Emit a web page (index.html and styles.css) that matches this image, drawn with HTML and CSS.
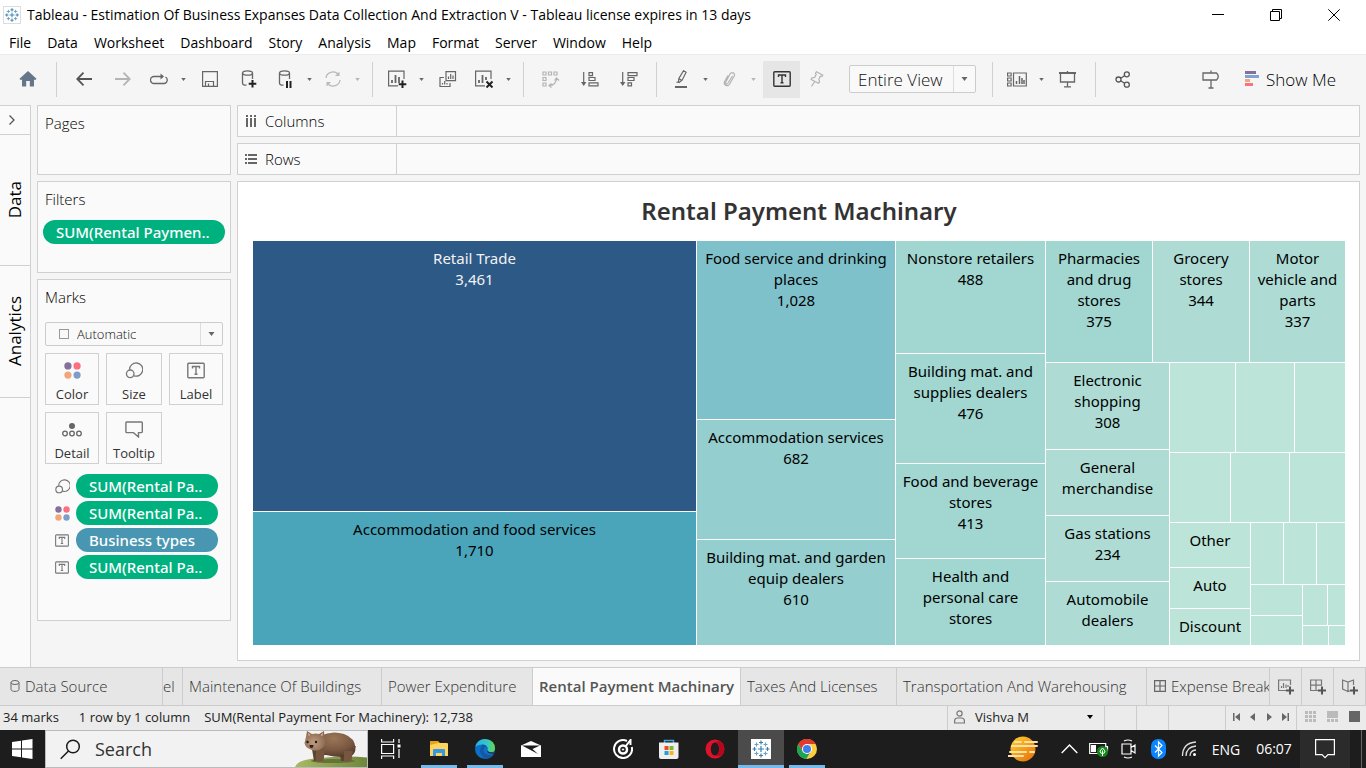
FILE: index.html
```html
<!DOCTYPE html>
<html lang="en">
<head>
<meta charset="utf-8">
<meta name="viewport" content="width=device-width, initial-scale=1">
<title>Tableau - Rental Payment Machinary</title>
<link rel="stylesheet" href="styles.css">
</head>
<body>
<svg class="defs" aria-hidden="true">
  <symbol id="caret" viewBox="0 0 6 4"><path d="M0 0h6L3 4z" fill="currentColor"/></symbol>
  <symbol id="label" viewBox="0 0 18 16"><path d="M1.7.8h14.6a.9.9 0 0 1 .9.9v12.6a.9.9 0 0 1-.9.9H1.7a.9.9 0 0 1-.9-.9V1.700a.9.9 0 0 1 .9-.9zM5.500 6V4h7v2M9 4v7.500M7.500 11.800h3" fill="none" stroke="currentColor" stroke-width="1.400"/></symbol>
  <symbol id="size" viewBox="0 0 18 18"><g fill="none" stroke="currentColor" stroke-width="1.400"><path d="M4.300 8A7 7 0 1 1 9 14.600"/><circle cx="5" cy="12.500" r="4"/></g></symbol>
  <symbol id="color" viewBox="0 0 16 16"><circle cx="3.700" cy="3.700" r="3.400" fill="#84709b"/><circle cx="12.300" cy="3.700" r="3.400" fill="#fc7182"/><circle cx="3.700" cy="12.300" r="3.400" fill="#f1a67c"/><circle cx="12.300" cy="12.300" r="3.400" fill="#7c9fc9"/></symbol>
  <symbol id="tableau" viewBox="0 0 20 20"><path fill="#fff" d="M0 0h20v20H0z"/><g fill="none" stroke-width="1.200"><path stroke="#3f7fae" d="M10 7v6M7 10h6M10 1.500v4M8 3.500h4M10 14.500v4M8 16.500h4M3.500 8v4M1.500 10h4M16.500 8v4M14.500 10h4"/><path stroke="#6ba3c6" d="M5.500 3.500v4M3.500 5.500h4M14.500 3.500v4M12.500 5.500h4M5.500 12.500v4M3.500 14.500h4M14.500 12.500v4M12.500 14.500h4"/></g></symbol>
</svg>

<div class="app">
  <header class="titlebar">
    <svg class="logo" width="18" height="18"><use href="#tableau"/></svg>
    <h1 class="titlebar-text">Tableau - Estimation Of Business Expanses Data Collection And Extraction V - Tableau license expires in 13 days</h1>
    <div class="window-buttons">
      <button aria-label="Minimize"><svg width="12" height="12"><path d="M0 5.500h12" stroke="#000"/></svg></button>
      <button aria-label="Restore"><svg width="12" height="12" fill="none" stroke="#000"><path d="M.5 2.500h9v9h-9zM2.500 2.500v-2h9v9h-2"/></svg></button>
      <button aria-label="Close"><svg width="12" height="12"><path d="M.3.300l11.400 11.400M11.700.300L.3 11.700" stroke="#000"/></svg></button>
    </div>
  </header>

  <nav class="menubar" aria-label="Main menu">
    <button>File</button><button>Data</button><button>Worksheet</button><button>Dashboard</button><button>Story</button><button>Analysis</button><button>Map</button><button>Format</button><button>Server</button><button>Window</button><button>Help</button>
  </nav>

  <div class="toolbar" role="toolbar" aria-label="Toolbar">
    <button class="tool tool-home" aria-label="Start page"><svg width="18" height="16"><path d="M9 0l8.500 7.800-.6.900H15V15.500h-4.200V10H7.200v5.500H3V8.700H1L.5 7.800z" fill="#667689"/></svg></button>
    <span class="sep sep-first"></span>
    <button class="tool wide" aria-label="Undo"><svg width="16" height="14" fill="none" stroke="#555" stroke-width="1.800"><path d="M16 7H1.500M7.500.700L1.300 7l6.200 6.300"/></svg></button>
    <button class="tool wide" aria-label="Redo"><svg width="16" height="14" fill="none" stroke="#b4b4b4" stroke-width="1.800"><path d="M0 7h14.500M8.500.700L14.700 7l-6.200 6.300"/></svg></button>
    <button class="tool" aria-label="Replay"><svg width="18" height="12" fill="none" stroke="#666" stroke-width="1.300"><path d="M4 10.500A3.500 3.500 0 0 1 4 3.500h9M15.500 4a3.500 3.500 0 0 1-1.500 6.500H4"/><path d="M10.500.500l3.500 3-3.500 3z" fill="#666" stroke="none"/></svg></button>
    <button class="drop" aria-label="Replay options"><svg width="5" height="3"><use href="#caret"/></svg></button>
    <button class="tool wide" aria-label="Save"><svg width="16" height="16" fill="none" stroke="#666" stroke-width="1.200"><path d="M.600.600h14.800v14.800H.6zM3.500 15v-4.500h8V15M6.500 15v-2.500"/></svg></button>
    <button class="tool wide" aria-label="New data source"><svg width="16" height="18" fill="none" stroke="#666" stroke-width="1.300"><ellipse cx="6.500" cy="3" rx="5" ry="2.200"/><path d="M1.500 3v10c0 1.300 2 2.200 4 2.200M11.500 3v6"/><path d="M11.500 10v7.500M7.700 13.700h7.600" stroke="#222" stroke-width="2"/></svg></button>
    <button class="tool" aria-label="Pause auto updates"><svg width="16" height="18" fill="none" stroke="#666" stroke-width="1.300"><ellipse cx="7.500" cy="3" rx="5" ry="2.200"/><path d="M2.500 3v10c0 1.300 2 2.200 4 2.200M12.500 3v6"/><path d="M10 11v7M13.500 11v7" stroke="#222" stroke-width="2"/></svg></button>
    <button class="drop" aria-label="Update options"><svg width="5" height="3"><use href="#caret"/></svg></button>
    <button class="tool" aria-label="Refresh"><svg width="18" height="16" fill="none" stroke="#b9b9b9" stroke-width="1.300"><path d="M2 7a7 6.500 0 0 1 12-4M16 9a7 6.500 0 0 1-12 4"/><path d="M15.500.500v4.500h-4.500zM2.500 15.500V11H7z" fill="#b9b9b9" stroke="none"/></svg></button>
    <button class="drop off" aria-label="Refresh options"><svg width="5" height="3"><use href="#caret"/></svg></button>
    <span class="sep"></span>
    <button class="tool" aria-label="New worksheet"><svg width="20" height="18" fill="none" stroke="#666" stroke-width="1.200"><path d="M17 9V1.200H1.600v14.600H11"/><path d="M5 13v-3M8.500 13V5M12 13V7" stroke-width="1.800"/><path d="M15.500 10.500V18M11.700 14.200h7.600" stroke="#222" stroke-width="2"/></svg></button>
    <button class="drop" aria-label="New options"><svg width="5" height="3"><use href="#caret"/></svg></button>
    <button class="tool wide" aria-label="Duplicate"><svg width="18" height="16" fill="none" stroke="#666" stroke-width="1.200"><path d="M7 .600h9.500v9H7zM5 6.500H1v9h10v-3.500"/><path d="M9.500 8V5.500M11.700 8V3M14 8V4.500M3.500 13.500V12M5.700 13.500V10M8 13.500V12"/></svg></button>
    <button class="tool" aria-label="Clear sheet"><svg width="20" height="18" fill="none" stroke="#666" stroke-width="1.200"><path d="M17 9V1.200H1.600v14.600H11"/><path d="M5 13v-3M8.500 13V5M12 10V7" stroke-width="1.800"/><path d="M12.500 11.500l6 6M18.500 11.500l-6 6" stroke="#222" stroke-width="2"/></svg></button>
    <button class="drop" aria-label="Clear options"><svg width="5" height="3"><use href="#caret"/></svg></button>
    <span class="sep"></span>
    <button class="tool wide" aria-label="Swap rows and columns"><svg width="18" height="17" fill="none" stroke="#b4b4b4" stroke-width="1.200"><path d="M1 1h3v3H1zM6.500 1h3v3h-3zM12 1h3v3h-3zM1 6.500h3v3H1zM1 12h3v3H1z"/><path d="M14.500 7.500c0 4-3 7-7 7M12.500 9.500l2-2.500 2.500 2.500M9.500 12.500l-2.500 2 2.500 2"/></svg></button>
    <button class="tool wide" aria-label="Sort ascending"><svg width="18" height="15" fill="none" stroke="#666" stroke-width="1.200"><path d="M2.700 0v13M8 .600h3.500v3H8zM8 5.500h6v3H8zM8 10.800h9v3H8z"/><path d="M0 10h5.400l-2.700 4z" fill="#666" stroke="none"/></svg></button>
    <button class="tool wide" aria-label="Sort descending"><svg width="18" height="15" fill="none" stroke="#666" stroke-width="1.200"><path d="M2.700 0v13M8 .600h9v3H8zM8 5.500h6v3H8zM8 10.800h3.500v3H8z"/><path d="M0 10h5.400l-2.700 4z" fill="#666" stroke="none"/></svg></button>
    <span class="sep"></span>
    <button class="tool" aria-label="Highlight"><svg width="14" height="18" fill="none" stroke="#666" stroke-width="1.200"><path d="M9.500.700l2.600 1.500-4 8-3 2.300-.7-.4.500-3.600zM5 8.700l3 1.800M2.500 12.500l2-.800"/><path d="M1 17h12" stroke-width="2"/></svg></button>
    <button class="drop" aria-label="Highlight options"><svg width="5" height="3"><use href="#caret"/></svg></button>
    <button class="tool" aria-label="Group members"><svg width="14" height="16" fill="none" stroke="#b4b4b4" stroke-width="1.200"><path d="M10.500 5l-4.800 7.500c-1 1.300-2.800.300-2-1.300L8 3c1.500-2.800 5.500-.800 4.200 2L7.500 13.200c-1.800 3-6.300 1-5-2.500L6 4.500"/></svg></button>
    <button class="drop off" aria-label="Group options"><svg width="5" height="3"><use href="#caret"/></svg></button>
    <button class="tool tool-on" aria-label="Show mark labels" aria-pressed="true"><svg width="18" height="16"><use href="#label"/></svg></button>
    <button class="tool" aria-label="Fix axes"><svg width="14" height="16" fill="none" stroke="#b4b4b4" stroke-width="1.200"><path d="M6.500.700l6.300 3.500-1 1.300-1.500-.3-1.500 3 .8 2.600-1.200 1.400L1.200 8.500l.6-1.500 2.800-.6 1.600-3-.7-1.300zM4.700 10.500L1.500 15.300"/></svg></button>
    <span class="select select-fit"><select aria-label="Fit"><option>Entire View</option></select><span class="select-arrow"><svg width="7" height="4"><use href="#caret"/></svg></span></span>
    <span class="sep sep-wide"></span>
    <button class="tool" aria-label="Show cards"><svg width="20" height="15" fill="none" stroke="#666" stroke-width="1.200"><path d="M.600 1h3.500v3H.6zM.600 6h3.500v3H.6zM.600 11h3.500v3H.6zM6.500 1h12.800v13H6.500z"/><path d="M9.500 12V9M12.500 12V4M15 12V6M17 12V8" stroke-width="1.500"/></svg></button>
    <button class="drop" aria-label="Card options"><svg width="5" height="3"><use href="#caret"/></svg></button>
    <button class="tool wide" aria-label="Presentation mode"><svg width="18" height="17" fill="none" stroke="#666" stroke-width="1.300"><path d="M1.500 2v9h14V2M8.500 11v4.500M5 15.800h7M8.500 0v2"/><path d="M0 2h17" stroke-width="2"/></svg></button>
    <span class="sep"></span>
    <button class="tool wide" aria-label="Share"><svg width="16" height="17" fill="none" stroke="#555" stroke-width="1.300"><circle cx="3.500" cy="8.500" r="2.500"/><circle cx="11.800" cy="3.300" r="2.500"/><circle cx="11.800" cy="13.700" r="2.500"/><path d="M5.600 7.200l4-2.500M5.600 9.800l4 2.500"/></svg></button>
    <div class="toolbar-end">
      <button class="tool" aria-label="Guide"><svg width="19" height="19" fill="none" stroke="#666" stroke-width="1.300"><path d="M1 3h13.500q3.500 3.500 0 7H1zM9 .500V3M9 10v8M6.500 18h5"/></svg></button>
      <button class="show-me"><svg width="14" height="16"><path fill="#84709b" d="M0 0h11v3H0z"/><path fill="#7fa3d0" d="M0 4h14v3H0z"/><path fill="#f1a67c" d="M0 8h5v3H0z"/><path fill="#fc7182" d="M0 12h8v3H0z"/></svg>Show Me</button>
    </div>
  </div>

  <main class="workspace">
    <aside class="side-tabs">
      <button class="side-toggle" aria-label="Expand pane"><svg width="6" height="10" fill="none" stroke="#555" stroke-width="1.300"><path d="M.500.500L5 5 .500 9.500"/></svg></button>
      <button class="side-tab side-data"><span>Data</span></button>
      <button class="side-tab side-analytics"><span>Analytics</span></button>
    </aside>

    <div class="cards">
      <section class="card card-pages"><h2>Pages</h2></section>
      <section class="card card-filters"><h2>Filters</h2><button class="pill">SUM(Rental Paymen..</button></section>
      <section class="card card-marks">
        <h2>Marks</h2>
        <span class="select select-mark"><i class="square"></i><select aria-label="Mark type"><option>Automatic</option></select><span class="select-arrow"><svg width="7" height="4"><use href="#caret"/></svg></span></span>
        <div class="mark-grid">
          <button><svg width="17" height="17"><use href="#color"/></svg>Color</button>
          <button><svg width="18" height="17"><use href="#size"/></svg>Size</button>
          <button><svg width="18" height="17"><use href="#label"/></svg>Label</button>
          <button><svg width="20" height="17" fill="none" stroke="#666" stroke-width="1.300"><circle cx="10" cy="5" r="3" fill="#666" stroke="none"/><circle cx="3" cy="12.500" r="2.300"/><circle cx="10" cy="12.500" r="2.300"/><circle cx="17" cy="12.500" r="2.300"/></svg>Detail</button>
          <button><svg width="18" height="17" fill="none" stroke="#777" stroke-width="1.400"><path d="M2 1h14.500a.8.800 0 0 1 .8.800v9a.8.800 0 0 1-.8.800H13.500V16L8.500 11.600H1.700a.8.800 0 0 1-.8-.8V1.800A.8.800 0 0 1 2 1z"/></svg>Tooltip</button>
        </div>
        <ul class="mark-pills">
          <li><svg width="15" height="15"><use href="#size"/></svg><button class="pill">SUM(Rental Pa..</button></li>
          <li><svg width="15" height="15"><use href="#color"/></svg><button class="pill">SUM(Rental Pa..</button></li>
          <li><svg width="14" height="13"><use href="#label"/></svg><button class="pill pill-blue">Business types</button></li>
          <li><svg width="14" height="13"><use href="#label"/></svg><button class="pill">SUM(Rental Pa..</button></li>
        </ul>
      </section>
    </div>

    <div class="sheet">
      <div class="shelf"><span class="shelf-name"><svg width="12" height="12" fill="#666"><path d="M1 0h2v2H1zM5 0h2v2H5zM9 0h2v2H9zM1 3h2v9H1zM5 3h2v9H5zM9 3h2v9H9z"/></svg>Columns</span></div>
      <div class="shelf"><span class="shelf-name"><svg width="12" height="12" fill="#666"><path d="M0 1h2v2H0zM0 5h2v2H0zM0 9h2v2H0zM3 1h9v2H3zM3 5h9v2H3zM3 9h9v2H3z"/></svg>Rows</span></div>
      <section class="view">
        <h2 class="view-title">Rental Payment Machinary</h2>
        <div class="treemap" id="treemap"></div>
      </section>
    </div>
  </main>

  <nav class="tabs" aria-label="Sheets">
    <button class="tab tab-source"><svg width="10" height="12" fill="none" stroke="#666"><ellipse cx="5" cy="2.500" rx="4" ry="2"/><path d="M1 2.500v7c0 2.500 8 2.500 8 0v-7"/></svg>Data Source</button>
    <button class="tab tab-cut" aria-label="Previous sheet">el</button>
    <button class="tab tab-maintenance">Maintenance Of Buildings</button>
    <button class="tab tab-power">Power Expenditure</button>
    <button class="tab tab-active" aria-current="page">Rental Payment Machinary</button>
    <button class="tab tab-taxes">Taxes And Licenses</button>
    <button class="tab tab-transport">Transportation And Warehousing</button>
    <button class="tab tab-last"><svg width="12" height="12" fill="none" stroke="#666" stroke-width="1.200"><path d="M.600.600h10.800v10.800H.6zM6 .600v10.800M.600 6h10.800"/></svg>Expense Break</button>
    <button class="tab-new" aria-label="New worksheet"><svg width="16" height="16" fill="none" stroke="#777" stroke-width="1.200"><path d="M12.500 6V1H.600v10.500H9M3.500 9V7M5.500 9V4M8 9V5.500M10 8V6"/><path d="M12 7.500v8M8 11.500h8" stroke="#555" stroke-width="2"/></svg></button>
    <button class="tab-new" aria-label="New dashboard"><svg width="16" height="16" fill="none" stroke="#777" stroke-width="1.200"><path d="M11.500 6V1H.600v10.500H8M6 1v10.500M.600 6.200H12"/><path d="M12 7.500v8M8 11.500h8" stroke="#555" stroke-width="2"/></svg></button>
    <button class="tab-new" aria-label="New story"><svg width="16" height="16" fill="none" stroke="#777" stroke-width="1.200"><path d="M6 12.500L.600 10V1L6 3l5.500-2v5M6 3v9.500l2-.800"/><path d="M12 7.500v8M8 11.500h8" stroke="#555" stroke-width="2"/></svg></button>
  </nav>

  <footer class="status">
    <span class="status-marks">34 marks</span><span class="status-rows">1 row by 1 column</span><span class="status-sum">SUM(Rental Payment For Machinery): 12,738</span>
    <button class="status-user"><svg width="11" height="14" fill="none" stroke="#777" stroke-width="1.200"><circle cx="5.500" cy="3.500" r="2.600"/><path d="M.600 13V11q0-3 3-3h3.800q3 0 3 3v2z"/></svg><span>Vishva M</span><svg class="user-caret" width="8" height="4"><use href="#caret"/></svg></button>
    <span class="status-cell"></span><span class="status-cell"></span><span class="status-cell status-cell-wide"></span>
    <div class="status-nav">
      <button aria-label="First"><svg width="7" height="8" fill="#666"><path d="M0 0h1.500v8H0zM7 0v8L2 4z"/></svg></button>
      <button aria-label="Previous"><svg width="7" height="8" fill="#666"><path d="M6 0v8L1 4z"/></svg></button>
      <button aria-label="Next"><svg width="7" height="8" fill="#666"><path d="M1 0v8l5-4z"/></svg></button>
      <button aria-label="Last"><svg width="7" height="8" fill="#666"><path d="M5.500 0H7v8H5.500zM0 0v8l5-4z"/></svg></button>
    </div>
    <div class="status-views">
      <button aria-label="Sheet sorter"><svg width="12" height="12" fill="#bbb"><path d="M0 0h3v3H0zM4 0h3v3H4zM8 0h3v3H8zM0 4h3v3H0zM4 4h3v3H4zM8 4h3v3H8zM0 8h3v3H0zM4 8h3v3H4zM8 8h3v3H8z"/></svg></button>
      <button aria-label="Filmstrip"><svg width="12" height="12" fill="#bbb"><path d="M0 0h11v7H0zM0 8h3v3H0zM4 8h3v3H4zM8 8h3v3H8z"/></svg></button>
      <button aria-label="Tabs"><svg width="12" height="12" fill="#666"><path d="M0 0h11v11H0z"/></svg></button>
    </div>
  </footer>

  <footer class="taskbar">
    <button class="start" aria-label="Start"><svg width="21" height="20" fill="#fff"><path d="M0 3l9-1.300V9.500H0zM10 1.500L20.500 0v9.500H10zM0 10.500h9v7.800L0 17zM10 10.500h10.500V20L10 18.500z"/></svg></button>
    <label class="search">
      <svg width="21" height="21" fill="none" stroke="#1a1a1a" stroke-width="1.500"><circle cx="13" cy="7.500" r="6.300"/><path d="M8.500 12L.700 19.800"/></svg>
      <input type="search" placeholder="Search" aria-label="Search">
      <svg class="wombat" width="73" height="36" viewBox="0 0 73 36">
        <defs><radialGradient id="fur" cx=".45" cy=".25" r=".8"><stop offset="0" stop-color="#9c7656"/><stop offset=".6" stop-color="#795841"/><stop offset="1" stop-color="#4f3729"/></radialGradient><radialGradient id="face" cx=".45" cy=".6" r=".6"><stop offset="0" stop-color="#c09c80"/><stop offset="1" stop-color="#8a684e"/></radialGradient><linearGradient id="hill" x2="1"><stop offset="0" stop-color="#a9b865"/><stop offset="1" stop-color="#6f873c"/></linearGradient></defs>
        <path d="M1 36q2-7 20-8.500Q50 24 73 26.500V36z" fill="url(#hill)"/>
        <ellipse cx="39" cy="30" rx="22" ry="2" fill="#667238"/>
        <path d="M18 18l2 12h8l2-6h16l1 6h10l1-7 4-8z" fill="#5c422f"/>
        <path d="M26 5Q38-1 50 3q11 4 11.500 14 0 6-5 8.500Q44 27 32 24 22 20 22 12z" fill="url(#fur)"/>
        <path d="M22 18h9l-1.500 12q-4 1.500-8 0zM50 20h9l-2 10q-4 1.500-7 0z" fill="#76563f"/>
        <path d="M12 6l1-6 5 3q4-1 7 0l5-3 .5 7q2 5-1.500 9.500-5 4.500-11 2.500-7-2-7.500-7z" fill="url(#face)"/>
        <path d="M14 1.500l.5 3.500 2-1zM29 1.500L26.500 4l2 1.500z" fill="#d0ad96"/>
        <circle cx="13.500" cy="11" r="1.200" fill="#171717"/><circle cx="22" cy="11" r="1.200" fill="#171717"/><path d="M15.500 14h4q0 3-2 3t-2-3z" fill="#2e211c"/>
      </svg>
    </label>
    <nav class="apps" aria-label="Applications">
      <button class="app-button app-first" aria-label="Task view"><svg width="20" height="20" fill="none" stroke="#fff" stroke-width="1.200"><path d="M.600 5.500h12v9H.6zM.600 0v3h12V0M.600 20v-3h12v3M18 0v4M18 10v9"/><path d="M16.500 5.500h3v3h-3z" fill="#fff" stroke="none"/></svg></button>
      <button class="app-button open" aria-label="File Explorer"><svg width="20" height="18"><path d="M1 1h8l2 2v5H1z" fill="#e8a419"/><path d="M1 5l8-2h9q1 0 1 1v12H1z" fill="#ffd35c"/><path d="M4 16V10q0-1 1-1h10q1 0 1 1v6h-3v-3H7v3z" fill="#3399e6"/></svg></button>
      <button class="app-button open" aria-label="Edge"><svg width="20" height="20"><defs><linearGradient id="eg" x1="0" x2="1"><stop offset="0" stop-color="#27aee8"/><stop offset=".6" stop-color="#35c8c3"/><stop offset="1" stop-color="#66d64b"/></linearGradient></defs><circle cx="10" cy="10" r="10" fill="#0c70c8"/><path d="M.300 8Q2 0 10.500 0 20 1 20 9.500q0 4-5 4-4-.5-2-4Q12 6 8 5.500 3 5 .300 8z" fill="url(#eg)"/><path d="M8 5.500Q4 9 5.500 14T12 20q5-1 7-5-4 2-8 0t-2-6q2-2 3-1-1-2.500-4-2.500z" fill="#1557a0"/><path d="M12 11q0 4 6.500 3.500l.500-1q-5 .500-6-1.500z" fill="#1c1c1c"/></svg></button>
      <button class="app-button" aria-label="Mail"><svg width="20" height="16"><path d="M0 4.500L10 0l10 4.500V16H0z" fill="#fff"/><path d="M1 4.500h18L11.500 8 17 13z" fill="#1d1d1d"/></svg></button>
      <span class="app-gap"></span>
      <button class="app-button" aria-label="Groove Music"><svg width="20" height="20" fill="none" stroke="#fff"><path d="M14 2A9 9 0 1 0 18.800 8" stroke-width="2"/><circle cx="10" cy="10.500" r="4" stroke-width="2.500"/><path d="M12.500 7.500L17.500 1v5" stroke-width="2"/><circle cx="10" cy="10.500" r=".7" fill="#fff"/></svg></button>
      <button class="app-button" aria-label="Microsoft Store"><svg width="20" height="20"><path d="M5.500 4V1.500h9V4" stroke="#39a9e4" stroke-width="1.500" fill="none"/><path d="M0 3.500h19.500V18q0 2-2 2H2q-2 0-2-2z" fill="#eee"/><path fill="#e74c25" d="M5.500 7h4v4h-4z"/><path fill="#80b82c" d="M10.500 7h4v4h-4z"/><path fill="#209fe5" d="M5.500 12h4v4h-4z"/><path fill="#f7b51b" d="M10.500 12h4v4h-4z"/></svg></button>
      <button class="app-button" aria-label="Opera"><svg width="20" height="20"><path fill-rule="evenodd" fill="#e0122b" d="M10 .500a9.500 9.500 0 1 0 0 19 9.500 9.500 0 0 0 0-19zm0 3c5.500 0 5.500 13 0 13s-5.500-13 0-13z"/><path d="M10 3q9-3 9.300 6.500T10 17q4-1 4.300-7T10 3z" fill="#b5061c"/></svg></button>
      <button class="app-button open current" aria-label="Tableau"><svg width="20" height="20"><use href="#tableau"/></svg></button>
      <button class="app-button open" aria-label="Chrome"><svg width="20" height="20"><circle cx="10" cy="10" r="10" fill="#ffcd40"/><path d="M1.300 5A10 10 0 0 1 18.700 5H10L5.700 12.500z" fill="#e3392d"/><path d="M1.300 5A10 10 0 0 0 9.300 20l4.400-7.500L10 15l-4.300-2.500z" fill="#1da453"/><circle cx="10" cy="10" r="5" fill="#fff"/><circle cx="10" cy="10" r="4" fill="#3d7ff0"/></svg></button>
    </nav>
    <div class="tray">
      <button class="tray-news" aria-label="News"><svg width="30" height="26"><defs><linearGradient id="sun" x1="0" y1="0" x2="1" y2="1"><stop offset="0" stop-color="#ffd32b"/><stop offset="1" stop-color="#e56b0b"/></linearGradient></defs><circle cx="15" cy="13" r="12.500" fill="url(#sun)"/><path d="M7 6h6M17 6h12M4 10h25M2 16h16M22 16h4M0 20h15" stroke="#ffe1a8" stroke-width="2" stroke-linecap="round"/></svg></button>
      <button class="tray-icon" aria-label="Hidden icons"><svg width="17" height="10" fill="none" stroke="#fff" stroke-width="1.400"><path d="M.700 9L8.500 1l7.800 8"/></svg></button>
      <button class="tray-icon" aria-label="Battery"><svg width="20" height="16"><path d="M.700 2.500h16v10h-16zM17 5.500h1.500v4H17" fill="none" stroke="#fff" stroke-width="1.200"/><path d="M2 4h5v7H2z" fill="#fff"/><circle cx="13.500" cy="10.500" r="5.500" fill="#108a1b"/><path d="M13.500 7l2.500 3q0 2.500-2.500 2.500T11 10zM13.500 9.500V15" fill="none" stroke="#fff"/></svg></button>
      <button class="tray-icon" aria-label="Meet now"><svg width="16" height="20" fill="none" stroke="#fff" stroke-width="1.200"><path d="M1 5h9v10H1zM10 8.500L14 6v8l-4-2.500M3 2q4-2 8 0M3 18q4 2 8 0"/></svg></button>
      <button class="tray-icon" aria-label="Bluetooth"><svg width="16" height="20"><rect width="15" height="20" rx="7" fill="#0a84ff"/><path d="M4 6.500l7 7-3.500 3.500V3L11 6.500l-7 7" fill="none" stroke="#fff" stroke-width="1.200"/></svg></button>
      <button class="tray-icon" aria-label="Wi-Fi"><svg width="17" height="16" fill="none" stroke="#ddd" stroke-width="1.300"><path d="M1.500 15Q1.500 2 15 1M5 15Q5 6 15 5M9 15Q9 9.500 15 9"/><circle cx="13.500" cy="13.500" r="1.500" fill="#fff" stroke="none"/></svg></button>
      <button class="tray-lang">ENG</button>
      <time class="clock">06:07</time>
      <button class="tray-notice" aria-label="Notifications"><svg width="20" height="20" fill="none" stroke="#fff" stroke-width="1.200"><path d="M.600.600h18.800v15H13l-3 3-3-3H.6z"/></svg></button>
      <button class="tray-desktop" aria-label="Show desktop"></button>
    </div>
  </footer>
</div>
<script src="treemap.js"></script>
</body>
</html>
```
FILE: treemap.js
```javascript
// A leaf has a weight, a tone and its label lines; cols and rows are nested splits.
// Weights are shares of the parent's width or height.
const leaf = (weight, tone, ...lines) => ({ weight, tone, lines });
const cols = (weight, ...children) => ({ weight, dir: 'cols', children });
const rows = (weight, ...children) => ({ weight, dir: 'rows', children });

const data = cols(1,
  rows(443,
    leaf(270, 'a', 'Retail Trade', '3,461'),
    leaf(133, 'b', 'Accommodation and food services', '1,710')),
  rows(198,
    leaf(178, 'c', 'Food service and drinking', 'places', '1,028'),
    leaf(119, 'd', 'Accommodation services', '682'),
    leaf(105, 'd', 'Building mat. and garden', 'equip dealers', '610')),
  rows(149,
    leaf(112, 'e', 'Nonstore retailers', '488'),
    leaf(109, 'e', 'Building mat. and', 'supplies dealers', '476'),
    leaf(94, 'e', 'Food and beverage', 'stores', '413'),
    leaf(86, 'e', 'Health and', 'personal care', 'stores')),
  rows(299,
    cols(121,
      leaf(106, 'e', 'Pharmacies', 'and drug', 'stores', '375'),
      leaf(96, 'f', 'Grocery', 'stores', '344'),
      leaf(95, 'f', 'Motor', 'vehicle and', 'parts', '337')),
    cols(282,
      rows(123,
        leaf(86, 'f', 'Electronic', 'shopping', '308'),
        leaf(65, 'f', 'General', 'merchandise'),
        leaf(65, 'f', 'Gas stations', '234'),
        leaf(63, 'f', 'Automobile', 'dealers')),
      rows(175,
        cols(89, leaf(65, 'g'), leaf(58, 'g'), leaf(50, 'g')),
        cols(69, leaf(60, 'g'), leaf(58, 'g'), leaf(55, 'g')),
        cols(122,
          rows(80, leaf(44, 'g', 'Other'), leaf(40, 'g', 'Auto'), leaf(36, 'g', 'Discount')),
          rows(94,
            cols(61, leaf(32, 'g'), leaf(32, 'g'), leaf(28, 'g')),
            cols(60,
              rows(51, leaf(30, 'g'), leaf(29, 'g')),
              rows(42,
                cols(40, leaf(24, 'g'), leaf(17, 'g')),
                cols(19, leaf(25, 'g'), leaf(16, 'g'))))))))));

function build(node) {
  const el = document.createElement('div');
  el.style.flexGrow = node.weight;
  if (node.children) {
    el.className = 'split split-' + node.dir;
    node.children.forEach(child => el.appendChild(build(child)));
  } else {
    el.className = 'cell tone-' + node.tone;
    node.lines.forEach(line => {
      const span = document.createElement('span');
      span.textContent = line;
      el.appendChild(span);
    });
  }
  return el;
}
document.getElementById('treemap').appendChild(build(data));
```
FILE: styles.css
```css
* { box-sizing: border-box; }
body {
  margin: 0;
  font-family: "Open Sans", "Liberation Sans", sans-serif;
  font-size: 15px;
  color: #222;
  background: #f5f5f5;
}
button {
  font: inherit;
  color: inherit;
  background: none;
  border: 0;
  padding: 0;
  margin: 0;
  cursor: pointer;
}
svg { display: block; flex: none; }
h1, h2, ul { margin: 0; padding: 0; font-weight: 400; }
.defs { position: absolute; width: 0; height: 0; }
.app { display: flex; flex-direction: column; min-height: 100vh; }

/* Title and menu */
.titlebar { display: flex; align-items: center; height: 30px; background: #fff; color: #000; }
.logo { margin: 0 6px 0 3px; border: 1px solid #ddd; }
.titlebar-text { flex: 1; font-size: 14px; line-height: 20px; white-space: nowrap; overflow: hidden; }
.window-buttons { display: flex; margin-right: 3px; }
.window-buttons button { width: 58px; height: 28px; display: flex; align-items: center; justify-content: center; }
.menubar { display: flex; gap: 16px; height: 24px; padding: 0 9px; background: #fff; color: #000; font-size: 14px; line-height: 26px; }

/* Toolbar */
.toolbar { display: flex; align-items: center; height: 51px; padding-bottom: 2px; border-top: 1px solid #ececec; background: #f5f5f5; color: #666; }
.tool, .drop { display: flex; align-items: center; justify-content: center; flex: none; width: 34px; height: 37px; }
.wide { width: 39px; }
.drop { width: 14px; }
.off { color: #b4b4b4; }
.tool-home { width: 56px; }
.tool-on { width: 37px; margin-left: 3px; background: #e6e6e6; color: #333; }
.sep { flex: none; width: 1px; height: 35px; margin: 0 7px 0 8px; background: #d0d0d0; }
.sep-first { margin-left: 0; }
.sep-wide { margin-left: 16px; }
.toolbar-end { display: flex; align-items: center; gap: 17px; margin-left: auto; padding-right: 30px; }
.show-me { display: flex; align-items: center; gap: 7px; font-size: 17px; font-weight: 300; color: #000; white-space: nowrap; }
.select { display: flex; align-items: center; border: 1px solid #ccc; border-radius: 2px; background: #f9f9f9; color: #666; }
.select select {
  flex: 1;
  min-width: 0;
  height: 100%;
  appearance: none;
  border: 0;
  background: transparent;
  font: inherit;
  color: #111;
  padding: 0;
}
.select-arrow { display: flex; align-items: center; justify-content: center; width: 22px; height: 100%; border-left: 1px solid #ddd; pointer-events: none; }
.select-fit { width: 127px; height: 28px; margin-left: 15px; padding-left: 8px; font-size: 17px; font-weight: 300; }

/* Workspace */
.workspace { display: flex; flex: 1; padding-right: 6px; }
.side-tabs { display: flex; flex-direction: column; width: 31px; border: solid #d0d0d0; border-width: 1px 1px 0 0; background: #fafafa; }
.side-toggle { display: flex; align-items: center; justify-content: center; height: 29px; padding-right: 6px; border-bottom: 1px solid #d0d0d0; }
.side-tab { display: flex; align-items: center; justify-content: center; border-bottom: 1px solid #d0d0d0; font-size: 17px; color: #000; }
.side-tab span { writing-mode: vertical-rl; transform: rotate(180deg); line-height: 24px; }
.side-data { height: 131px; }
.side-analytics { height: 132px; }
.cards { display: flex; flex-direction: column; gap: 6px; width: 194px; margin: 0 6px; }
.card { border: 1px solid #d0d0d0; background: #fafafa; padding: 0 7px; }
.card h2 { font-size: 15px; font-weight: 300; line-height: 34px; color: #000; }
.card-pages { height: 70px; }
.card-filters { height: 92px; padding: 0 5px; }
.card-filters h2 { padding-left: 2px; margin-bottom: 4px; }
.card-marks { height: 342px; }
.pill {
  display: block;
  width: 100%;
  height: 24px;
  padding-left: 13px;
  border-radius: 12px;
  background: #00b180;
  color: #fff;
  font-family: "Noto Sans", sans-serif;
  font-size: 15px;
  font-weight: 500;
  line-height: 24px;
  text-align: left;
  white-space: nowrap;
}
.pill-blue { background: #4996b2; }
.select-mark { height: 24px; margin: 8px 0 0; padding-left: 13px; gap: 8px; font-size: 13px; font-weight: 300; }
.square { width: 10px; height: 10px; border: 1px solid #999; }
.mark-grid { display: grid; grid-template-columns: 54px 56px 54px; gap: 7px; margin-top: 7px; }
.mark-grid button { display: flex; flex-direction: column; align-items: center; gap: 6px; height: 52px; padding-top: 8px; border: 1px solid #d0d0d0; font-size: 13px; line-height: 18px; color: #333; }
.mark-grid svg, .mark-pills svg { color: #777; }
.mark-pills { display: grid; gap: 3px; margin-top: 10px; padding: 0 5px 0 10px; list-style: none; }
.mark-pills li { display: grid; grid-template-columns: 15px 1fr; align-items: center; gap: 6px; }

.sheet { display: flex; flex-direction: column; flex: 1; min-width: 0; gap: 6px; }
.shelf { height: 32px; border: 1px solid #d0d0d0; background: #fafafa; }
.shelf-name { display: flex; align-items: center; gap: 8px; width: 159px; height: 100%; padding-left: 7px; border-right: 1px solid #d0d0d0; font-weight: 300; color: #000; }
.view { display: flex; flex-direction: column; flex: 1; margin-bottom: 6px; padding: 0 14px 15px 15px; border: 1px solid #d0d0d0; background: #fff; }
.view-title { margin-bottom: 2px; font-family: "Noto Sans", sans-serif; font-size: 24px; font-weight: 600; line-height: 57px; color: #333; text-align: center; }

/* Treemap */
.treemap { display: flex; flex: 1; font-family: "Noto Sans", sans-serif; font-size: 15px; line-height: 21px; }
.split { display: flex; gap: 1px; flex-basis: 0; min-width: 0; min-height: 0; }
.split-rows { flex-direction: column; }
.cell { display: flex; flex-direction: column; align-items: center; flex-basis: 0; min-width: 0; min-height: 0; overflow: hidden; color: #000; white-space: nowrap; }
.cell span:first-child { margin-top: 7px; }
.tone-a { background: #2d5986; color: #f2f2f2; }
.tone-b { background: #4aa5bb; }
.tone-c { background: #7fc1cb; }
.tone-d { background: #94cece; }
.tone-e { background: #a1d6d1; }
.tone-f { background: #aedcd5; }
.tone-g { background: #bce4d8; }

/* Sheet tabs */
.tabs { display: flex; height: 39px; border: solid #ccc; border-width: 1px 0; background: #e6e6e6; color: #333; }
.tab { display: flex; align-items: center; flex: none; gap: 5px; padding: 0 0 2px 6px; border-right: 1px solid #ccc; font-weight: 300; white-space: nowrap; overflow: hidden; }
.tab-source { width: 163px; padding-left: 10px; }
.tab-cut { width: 20px; padding-left: 0; }
.tab-maintenance { width: 199px; }
.tab-power { width: 151px; }
.tab-active { width: 208px; background: #fafafa; color: #555; font-weight: 600; }
.tab-taxes { width: 156px; }
.tab-transport { width: 250px; }
.tab-last { flex: 1; min-width: 0; padding-left: 7px; }
.tab-new { display: flex; align-items: center; justify-content: center; flex: none; width: 32px; border-right: 1px solid #ccc; }

/* Status bar */
.status { display: flex; align-items: center; height: 24px; background: #ebebeb; color: #222; font-size: 13px; line-height: 22px; white-space: nowrap; }
.status > span { height: 24px; }
.status-marks { padding-left: 3px; }
.status-rows { padding-left: 20px; }
.status-sum { padding-left: 14px; }
.status-user { display: flex; align-items: center; gap: 10px; width: 157px; height: 24px; margin-left: auto; padding: 0 10px 2px 6px; border-left: 1px solid #ccc; }
.user-caret { margin-left: auto; color: #000; }
.status-cell { width: 32px; border-left: 1px solid #ccc; }
.status-cell-wide { width: 57px; }
.status-nav, .status-views { display: flex; align-items: center; justify-content: space-between; height: 24px; padding-bottom: 2px; border-left: 1px solid #ccc; }
.status-nav { width: 71px; padding: 0 7px 2px; }
.status-views { width: 70px; padding: 0 5px 2px 8px; }

/* Taskbar */
.taskbar { display: flex; height: 38px; background: #1d1d1d; color: #fff; }
.taskbar button { display: flex; align-items: center; justify-content: center; flex: none; }
.start { width: 45px; }
.search { display: flex; align-items: center; width: 323px; padding-left: 14px; border: 1px solid #bbb; background: #f2f2f2; }
.search input { flex: 1; min-width: 0; height: 34px; margin-left: 14px; padding: 0; border: 0; outline: 0; background: transparent; font: inherit; font-size: 18px; color: #222; }
.search input::placeholder { color: #333; opacity: 1; }
.apps { display: flex; }
.taskbar .app-button { width: 46px; border-bottom: 3px solid transparent; border-top: 3px solid transparent; }
.taskbar .app-first { width: 48px; padding-right: 2px; }
.taskbar .open { width: 36px; margin: 0 5px; border-bottom-color: #76b9ed; }
.taskbar .current { width: 46px; margin: 0; background: #4b4b4b; border-top-color: #4b4b4b; }
.app-gap { width: 46px; }
.tray { display: flex; margin-left: auto; font-size: 14px; }
.tray-news { width: 62px; }
.tray-icon { width: 30px; }
.tray-lang { width: 44px; }
.clock { width: 52px; line-height: 38px; text-align: center; }
.tray-notice { width: 50px; background: #2b2b2b; }
.taskbar .tray-desktop { width: 5px; margin-left: 11px; border-left: 1px solid #666; }
```
